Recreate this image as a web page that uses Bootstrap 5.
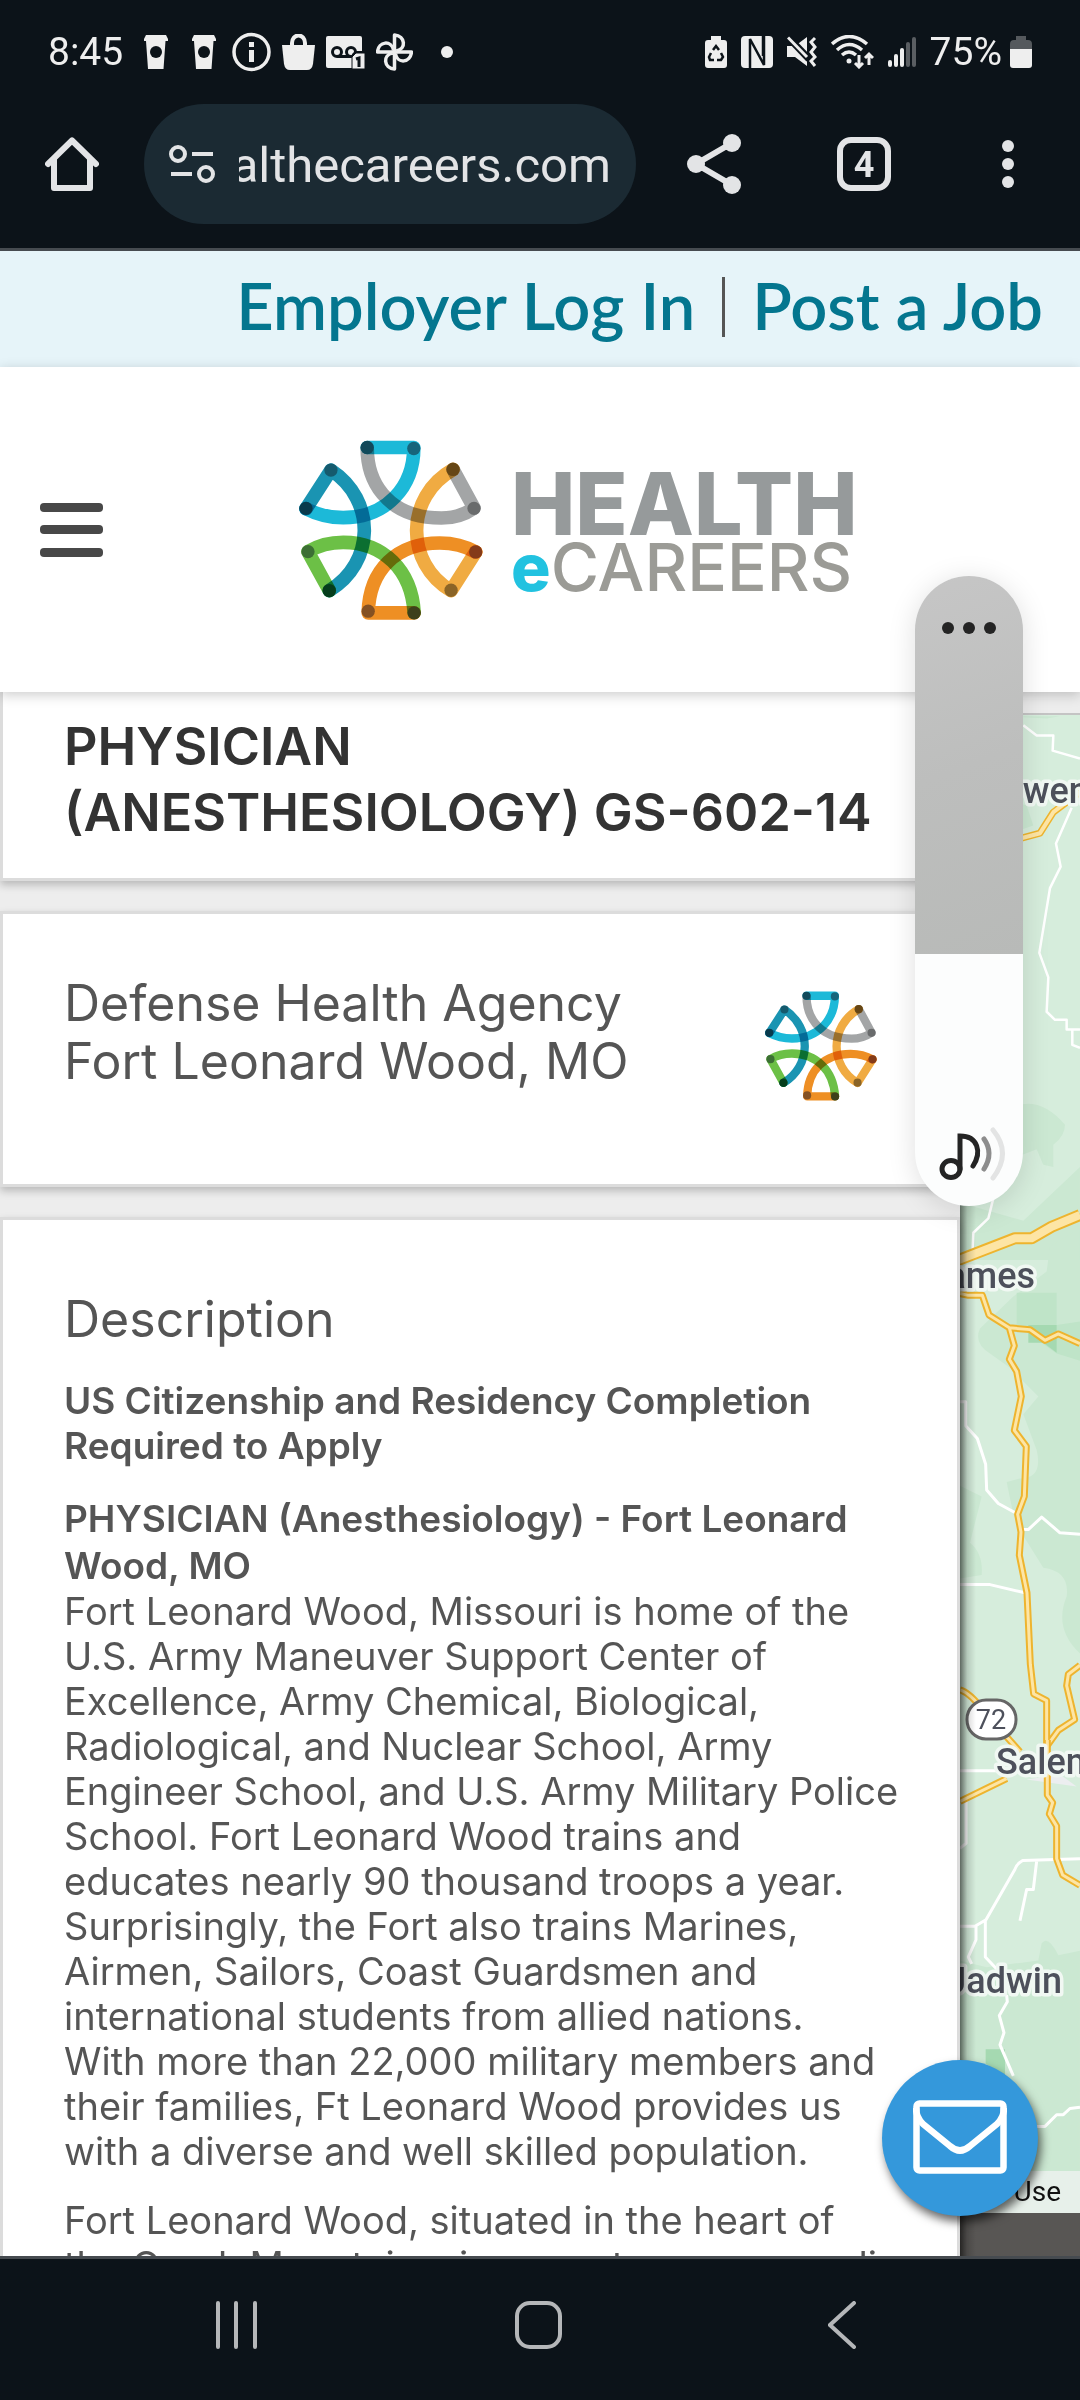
<!DOCTYPE html>
<html lang="en">
<head>
<meta charset="utf-8">
<meta name="viewport" content="width=device-width, initial-scale=1">
<title>Health eCareers</title>
<link href="https://cdn.jsdelivr.net/npm/bootstrap@5.3.0/dist/css/bootstrap.min.css" rel="stylesheet">
<style>
  body { font-family: "Inter", "Liberation Sans", sans-serif; color: #555; background: #ededed; }
  .sys { background: #0c1319; color: #e3e4e6; font-family: Roboto, sans-serif; }
  .sys button, .menu-btn { background: none; border: 0; padding: 0; color: inherit; line-height: 1; }
  svg { display: block; flex: none; }
  .status { height: 104px; padding: 0 48px; font-size: 39px; color: #eee; }
  .status-l { gap: 11px; }
  .status-l .cup-ico { margin: 0 5px 0 10px; }
  .status-l .more-dot { margin-left: 17px; }
  .status-r { gap: 14px; }
  .toolbar-row { height: 144px; padding: 0 66px 24px 45px; }
  .omni { width: 492px; height: 120px; border-radius: 60px; background: #1b2a33; padding: 0 25px; margin-left: 45px; }
  .share-btn { margin-left: 51px; }
  .tabs-btn { margin-left: 94px; }
  .url { width: 372px; font-size: 49px; line-height: 60px; padding-top: 4px; }
  .edge { height: 3px; background: #464b50; }
  .topbar { height: 116px; background: #e6f4f9; padding: 0 37px 4px 0; }
  .topbar a { color: #04768f; text-decoration: none; font-family: Lato, sans-serif; font-weight: 600; font-size: 65px; line-height: 60px; padding-bottom: 4px; }
  .topbar .rule { width: 3px; height: 60px; background: #555; margin: 0 27px; }
  .site-head { height: 325px; padding: 0 40px; color: #484848; z-index: 2; box-shadow: 0 3px 12px rgba(0,0,0,.2); }
  .brand { margin-left: 196px; gap: 28px; text-decoration: none; }
  .brand-a { font-weight: 800; font-size: 86px; line-height: 74px; color: #969a9b; }
  .brand-b { font-weight: 500; font-size: 66px; line-height: 52px; color: #9b9b96; }
  .brand-b b { color: #22c2e0; font-weight: 800; }
  .content-row { min-height: 0; }
  .panel { gap: 30px; z-index: 1; min-width: 0; }
  .sheet { background: #fff; border: 3px solid #dcdcdc; padding: 0 61px; box-shadow: 0 4px 8px rgba(0,0,0,.22); }
  .sheet-title { border-top: 0; padding-top: 22px; padding-bottom: 32px; }
  .sheet-title h1 { font-size: 52px; line-height: 66px; font-weight: 600; color: #333; margin: 0; white-space: nowrap; }
  .sheet-org { padding: 60px 80px 82px 61px; font-size: 50px; line-height: 58px; }
  .sheet-desc { padding-top: 70px; padding-bottom: 60px; }
  .sheet-desc h2 { font-size: 50px; line-height: 58px; font-weight: 400; margin: 0 0 30px; }
  .sheet-desc p { font-size: 38px; line-height: 45px; margin: 0 0 24px; white-space: nowrap; }
  .sheet-desc p.req { font-size: 37px; font-weight: 600; margin-bottom: 27px; }
  .sheet-desc .role { font-size: 37px; font-weight: 600; line-height: 47px; display: block; }
  .map-col { width: 120px; margin-top: 21px; background: #585654; border-top: 2px solid #c4c4c4; }
  .map-shade { width: 16px; background: linear-gradient(90deg, rgba(0,0,0,.5), rgba(0,0,0,.15) 45%, rgba(0,0,0,0)); }
  .map-lbl { font: 500 36px Roboto, sans-serif; fill: #4d505b; stroke: #f1f8f3; stroke-width: 7px; paint-order: stroke; stroke-linejoin: round; }
  .terms { height: 42px; background: #e7f0ea; color: #111; font: 28px/42px Roboto, sans-serif; padding-right: 19px; text-decoration: none; }
  .volume { right: 57px; top: 576px; width: 108px; height: 630px; border-radius: 54px; overflow: hidden; background: #fcfdfd; z-index: 5; box-shadow: 0 4px 28px rgba(0,0,0,.13); }
  .volume .lvl { height: 378px; background: linear-gradient(160deg, #c6c6c6, #bdbebd 50%, #b8bab8); padding-top: 46px; }
  .mail { right: 42px; bottom: 184px; width: 156px; height: 156px; border-radius: 50%; border: 0; background: #3498db; z-index: 4; padding: 0 0 2px; box-shadow: 3px 6px 10px rgba(0,0,0,.6); }
  .navkeys { height: 141px; padding: 0 224px 9px 216px; }
  .home-key { margin-left: 257px; }
</style>
<script src="https://cdn.jsdelivr.net/npm/bootstrap@5.3.0/dist/js/bootstrap.bundle.min.js"></script>
</head>
<body class="d-flex flex-column vh-100 overflow-hidden position-relative">

<svg width="0" height="0" class="position-absolute" aria-hidden="true">
  <defs>
    <symbol id="mark-logo" viewBox="57 60 553 540">
      <g fill="none" stroke-width="41" stroke-linejoin="round" stroke-linecap="round">
        <g style="mix-blend-mode:multiply" stroke="#a3a5a6"><path d="M262 84C262 170 310 294 485 294Q540 294 583 264L520 148"/></g>
        <g style="mix-blend-mode:multiply" stroke="#1cb9d8"><path d="M78 266Q130 293 190 293C320 293 402 200 402 82H262"/></g>
        <g style="mix-blend-mode:multiply" stroke="#1a94b2"><path d="M78 266L153 150C290 240 285 430 148 512"/></g>
        <g style="mix-blend-mode:multiply" stroke="#6cc046"><path d="M148 512L84 395Q130 367 190 367C310 367 395 450 403 578"/></g>
        <g style="mix-blend-mode:multiply" stroke="#ee8f24"><path d="M403 579H265C268 450 350 369 480 369Q540 369 588 396"/></g>
        <g style="mix-blend-mode:multiply" stroke="#f0ab42"><path d="M520 148C375 230 375 430 514 512L588 396"/></g>
      </g>
      <circle cx="262" cy="82" r="20" fill="#11495a"/><circle cx="402" cy="85" r="20" fill="#17657b"/>
      <circle cx="153" cy="150" r="20" fill="#155a6d"/><circle cx="78" cy="265" r="20" fill="#093a4c"/>
      <circle cx="520" cy="148" r="20" fill="#664615"/><circle cx="583" cy="265" r="20" fill="#696b6c"/>
      <circle cx="84" cy="395" r="20" fill="#3c6f34"/><circle cx="148" cy="512" r="20" fill="#053d1c"/>
      <circle cx="588" cy="396" r="20" fill="#843b19"/><circle cx="514" cy="511" r="20" fill="#8b6426"/>
      <circle cx="265" cy="574" r="20" fill="#855122"/><circle cx="403" cy="579" r="20" fill="#3d401b"/>
    </symbol>
    <symbol id="cup" viewBox="0 0 24 36"><path fill="#eee" d="M2 1H22L24 5V7H21.500L19.500 35H4L2 7H0V5Z"/><circle cx="12" cy="18" r="6" fill="#0c1319"/></symbol>
  </defs>
</svg>

<div class="sys">
  <div class="status d-flex align-items-center justify-content-between">
    <div class="status-l d-flex align-items-center">
      <span>8:45</span>
      <svg class="cup-ico" width="24" height="36"><use href="#cup"/></svg>
      <svg class="cup-ico ms-2" width="24" height="36"><use href="#cup"/></svg>
      <svg width="39" height="40" viewBox="0 0 39 40"><circle cx="19.500" cy="20" r="17.500" fill="none" stroke="#eee" stroke-width="3.500"/><path fill="#eee" d="M17 10h5v5h-5zM17 18h5v12h-5z"/></svg>
      <svg width="33" height="36" viewBox="0 0 33 36"><path fill="none" stroke="#eee" stroke-width="4" d="M10 12V9a6 7 0 0 1 13 0v3"/><path fill="#eee" d="M0 11h33l-2 19q-1 6-6 6H8q-5 0-6-6Z"/></svg>
      <svg width="39" height="34" viewBox="0 0 39 34"><path fill="#eee" d="M2 1H34q2 0 2 2V16H29l-3 3V33H2q-2 0-2-2V3Q0 1 2 1Z"/><g fill="none" stroke="#0c1319" stroke-width="3"><circle cx="11" cy="17" r="4.500"/><circle cx="25" cy="17" r="4.500"/><path d="M11 21.500H25"/></g><path fill="#eee" stroke="#0c1319" stroke-width="1" d="M30 18h9v16H26V22Z"/><path d="M30 24l3-1v9" fill="none" stroke="#0c1319" stroke-width="3"/></svg>
      <svg width="37" height="38" viewBox="-18.500 -19 37 38"><g fill="none" stroke="#eee" stroke-width="3.500" stroke-linejoin="round"><path id="vane" d="M0 0V-17C11-16 12-3 2-1"/><use href="#vane" transform="rotate(90)"/><use href="#vane" transform="rotate(180)"/><use href="#vane" transform="rotate(270)"/></g></svg>
      <svg class="more-dot" width="12" height="12"><circle cx="6" cy="6" r="6" fill="#eee"/></svg>
    </div>
    <div class="status-r d-flex align-items-center">
      <svg width="22" height="32" viewBox="0 0 22 32"><path fill="#eee" d="M6 0h10v4h3q3 0 3 3v22q0 3-3 3H3q-3 0-3-3V7q0-3 3-3h3z"/><g fill="none" stroke="#0c1319" stroke-width="2.500"><path d="M8 14l3-4 3 4M16 17l2 4-2 3h-4M9 24H5l-1-3 2-4"/></g></svg>
      <svg width="32" height="32" viewBox="0 0 32 32"><rect width="32" height="32" rx="4" fill="#eee"/><path d="M9 32V3L23 29V0M9 14V32M22 0V20" fill="none" stroke="#0c1319" stroke-width="2.500"/></svg>
      <svg width="30" height="32" viewBox="0 0 30 32"><path fill="#eee" d="M0 10h8L20 1v29L8 21H0z"/><path d="M0 0L22 23" stroke="#0c1319" stroke-width="7"/><path d="M1 1.500L20 21" stroke="#eee" stroke-width="3"/><path d="M28 2l-4 4 4 5-4 5 4 5-4 4 4 5" fill="none" stroke="#eee" stroke-width="3"/></svg>
      <svg width="43" height="34" viewBox="0 0 43 34"><g fill="none" stroke="#eee" stroke-width="3.500"><path d="M1 9Q18-6 36 9M6 15Q18 4 31 15M11 20Q18 14 25 20"/><path stroke-width="3" d="M28 20V32M24 28l4 4 4-4M38 30V19M34 23l4-4 4 4"/></g><circle cx="18" cy="26" r="2.500" fill="#eee"/></svg>
      <svg width="28" height="30" viewBox="0 0 28 30" stroke-width="4" stroke-linecap="round"><path stroke="#eee" d="M2 25v3M8 19v9M14 13v15"/><path stroke="#5a5e62" d="M20 7v21M26 2v26"/></svg>
      <span class="d-flex align-items-center gap-2">75%
      <svg width="22" height="32" viewBox="0 0 22 32"><path fill="#55595d" d="M6 0h10v4h2q4 0 4 4v6H0V8q0-4 4-4h2z"/><path fill="#eee" d="M0 13h22v16q0 3-3 3H3q-3 0-3-3z"/></svg></span>
    </div>
  </div>
  <div class="toolbar-row d-flex align-items-center">
    <button aria-label="Home"><svg width="54" height="54" viewBox="0 0 54 54" fill="none" stroke="#e3e4e6" stroke-width="6" stroke-linecap="round" stroke-linejoin="round"><path d="M3 27L27 3.500 51 27M9 22V51H45V22"/></svg></button>
    <div class="omni d-flex align-items-center justify-content-between">
      <svg width="46" height="40" viewBox="0 0 46 40" fill="none" stroke="#e3e4e6" stroke-width="4"><circle cx="9" cy="10" r="7"/><path d="M23 10H44M2 30H23"/><circle cx="37" cy="30" r="7"/></svg>
      <div class="url overflow-hidden d-flex justify-content-end">healthecareers.com</div>
    </div>
    <button class="share-btn" aria-label="Share"><svg width="56" height="60" viewBox="0 0 56 60" fill="#e3e4e6"><path d="M45 9L9 30 45 51" fill="none" stroke="#e3e4e6" stroke-width="6"/><circle cx="9" cy="30" r="9"/><circle cx="45" cy="9" r="9"/><circle cx="45" cy="51" r="9"/></svg></button>
    <button class="tabs-btn" aria-label="Tabs"><svg width="54" height="54" viewBox="0 0 54 54"><rect x="3" y="3" width="48" height="48" rx="11" fill="none" stroke="#e3e4e6" stroke-width="6"/><text x="27" y="40" text-anchor="middle" font-family="Roboto" font-weight="700" font-size="36" fill="#e3e4e6">4</text></svg></button>
    <button class="ms-auto" aria-label="More"><svg width="12" height="48" viewBox="0 0 12 48" fill="#e3e4e6"><circle cx="6" cy="6" r="6"/><circle cx="6" cy="24" r="6"/><circle cx="6" cy="42" r="6"/></svg></button>
  </div>
</div>
<div class="edge flex-shrink-0"></div>

<nav class="topbar d-flex align-items-center justify-content-end flex-shrink-0">
  <a href="#">Employer Log In</a><span class="rule"></span><a href="#">Post a Job</a>
</nav>

<header class="site-head d-flex align-items-center bg-white position-relative flex-shrink-0">
  <button class="menu-btn" aria-label="Menu"><svg width="63" height="54" viewBox="0 0 63 54" fill="#484848"><rect width="63" height="9" rx="4"/><rect y="22" width="63" height="9" rx="4"/><rect y="45" width="63" height="9" rx="4"/></svg></button>
  <a href="#" class="brand d-flex align-items-center">
    <svg width="184" height="180"><use href="#mark-logo"/></svg>
    <span class="d-flex flex-column"><span class="brand-a">HEALTH</span><span class="brand-b"><b>e</b>CAREERS</span></span>
  </a>
</header>

<main class="content-row d-flex flex-fill overflow-hidden">
  <div class="panel d-flex flex-column flex-fill position-relative">
    <section class="sheet sheet-title"><h1>PHYSICIAN<br>(ANESTHESIOLOGY) GS-602-14</h1></section>
    <section class="sheet sheet-org d-flex justify-content-between">
      <div>Defense Health Agency<br>Fort Leonard Wood, MO</div>
      <svg class="mt-3" width="112" height="112"><use href="#mark-logo"/></svg>
    </section>
    <section class="sheet sheet-desc">
      <h2>Description</h2>
      <p class="req">US Citizenship and Residency Completion<br>Required to Apply</p>
      <p><strong class="role">PHYSICIAN (Anesthesiology) - Fort Leonard<br>Wood, MO</strong>Fort Leonard Wood, Missouri is home of the<br>U.S. Army Maneuver Support Center of<br>Excellence, Army Chemical, Biological,<br>Radiological, and Nuclear School, Army<br>Engineer School, and U.S. Army Military Police<br>School. Fort Leonard Wood trains and<br>educates nearly 90 thousand troops a year.<br>Surprisingly, the Fort also trains Marines,<br>Airmen, Sailors, Coast Guardsmen and<br>international students from allied nations.<br>With more than 22,000 military members and<br>their families, Ft Leonard Wood provides us<br>with a diverse and well skilled population.</p>
      <p>Fort Leonard Wood, situated in the heart of<br>the Ozark Mountains, is a great, ever expanding</p>
    </section>
  </div>
  <aside class="map-col position-relative overflow-hidden flex-shrink-0">
    <svg width="120" height="1456" viewBox="960 715 120 1456" fill="none" stroke-linejoin="round">
      <path fill="#d6eddc" d="M960 715h120v1456H960z"/>
      <g transform="translate(880 560) scale(.3333 .4464)">
        <path fill="#cbe8d2" d="M430 350H540L500 355 430 352ZM400 540L440 550 460 595 400 610ZM400 1225Q480 1200 555 1265 555 1290 520 1310V1360L490 1355 470 1320 400 1340ZM240 1440L430 1480 600 1360V1568H240Z"/>
        <g stroke="#fff" stroke-width="2.500"><path vector-effect="non-scaling-stroke" d="M430 370L470 393H520L518 427 600 445M575 555L528 635 542 687 510 735 478 880 505 935 500 1012 525 1030H560V1052H600M577 1052V1086L600 1093M340 1430L325 1475 280 1507 277 1560"/></g>
        <path vector-effect="non-scaling-stroke" stroke="#eeb42e" stroke-width="7" d="M400 628L480 612 520 565 600 520"/><path vector-effect="non-scaling-stroke" stroke="#fde5a5" stroke-width="4" d="M400 628L480 612 520 565 600 520"/>
      </g>
      <g transform="translate(920 1200) scale(.3333 .3571)">
        <path fill="#cbe8d2" d="M480 80L390 130 380 200 280 270 180 360Q160 400 210 430L270 470 355 550 310 600 350 700Q370 780 300 780L260 790 280 880 310 940 370 1030Q450 1040 440 1110 400 1200 480 1270ZM120 800L185 830 150 960Q190 990 185 1050L120 1060Z"/>
        <path fill="#bfe4c8" d="M290 260H410V350L480 340V450L410 430 290 350Z"/><path fill="#a5d9b1" d="M325 350H410V428L370 400H325Z"/>
        <g stroke="#fff" stroke-width="3"><path vector-effect="non-scaling-stroke" d="M120 565H137V632L172 668 197 740 200 812 235 850 290 878M305 923H325L365 888 420 932 480 936M120 1077H210L315 1100"/></g>
        <g stroke="#eeb42e" stroke-width="7"><path vector-effect="non-scaling-stroke" stroke-width="12" d="M110 170L285 107H335L395 75 480 42"/><path vector-effect="non-scaling-stroke" d="M120 262L145 267H187L207 322 268 358 330 363 375 393 415 375 480 402M268 358L283 408 268 446 290 480 304 550 283 645 319 690 313 830 293 880 303 930 298 995 321 1100 331 1300 341 1383 380 1402V1560M120 1372Q150 1380 190 1430L300 1545M480 1303L445 1328 440 1360 464 1455 415 1485 380 1530"/></g>
        <g stroke="#fde5a5" stroke-width="3"><path vector-effect="non-scaling-stroke" stroke-width="8" d="M110 170L285 107H335L395 75 480 42"/><path vector-effect="non-scaling-stroke" d="M120 262L145 267H187L207 322 268 358 330 363 375 393 415 375 480 402M268 358L283 408 268 446 290 480 304 550 283 645 319 690 313 830 293 880 303 930 298 995 321 1100 331 1300 341 1383 380 1402V1560M120 1372Q150 1380 190 1430L300 1545M480 1303L445 1328 440 1360 464 1455 415 1485 380 1530"/></g>
      </g>
      <g transform="translate(860 1740) scale(.3333 .3444)">
        <path fill="#cbe8d2" d="M300 640L380 660 535 640 545 590Q565 565 595 625L660 612V1252H300Z"/><path fill="#a5d9b1" d="M377 898H435V975L377 940Z"/><path fill="#eceef0" d="M500 115L650 135 600 100Z"/>
        <g stroke="#fff" stroke-width="3"><path vector-effect="non-scaling-stroke" d="M300 89H420M318 175V300L300 315M660 345L488 350Q470 360 465 375L378 522 345 541H300M530 352L520 434H500L480 525M348 541V580L325 630 335 650M376 522V630L410 665M440 740L442 760 418 800 432 850 420 885 460 975M530 1122H555L590 1088H610L630 1070 660 1066"/></g>
        <g stroke="#eeb42e" stroke-width="7"><path vector-effect="non-scaling-stroke" d="M300 178L440 112M562 0V160L578 182 568 215 590 250V345L608 392 660 422"/></g>
        <g stroke="#fde5a5" stroke-width="3"><path vector-effect="non-scaling-stroke" d="M300 178L440 112M562 0V160L578 182 568 215 590 250V345L608 392 660 422"/></g>
      </g>
      <rect x="967" y="1700" width="49" height="39" rx="19" fill="#fff" stroke="#666" stroke-width="3"/>
      <text x="991" y="1729" text-anchor="middle" font-family="Roboto" font-size="27" fill="#4d505b">72</text>
      <g class="map-lbl"><text x="998" y="803">Owensville</text><text x="1035" y="1288" text-anchor="end">James</text><text x="996" y="1774">Salem</text><text x="1062" y="1993" text-anchor="end">Jadwin</text></g>
    </svg>
    <a href="#" class="terms d-flex justify-content-end">Use</a>
    <div class="map-shade position-absolute top-0 bottom-0 start-0"></div>
  </aside>
</main>

<div class="volume position-absolute d-flex flex-column justify-content-between">
  <div class="lvl d-flex justify-content-center"><svg width="54" height="12" viewBox="0 0 54 12" fill="#242424"><circle cx="6" cy="6" r="6"/><circle cx="27" cy="6" r="6"/><circle cx="48" cy="6" r="6"/></svg></div>
  <svg class="mx-auto mb-4" width="74" height="56" viewBox="-8 0 74 56" fill="none" stroke="#242424" stroke-width="5" stroke-linecap="round"><ellipse cx="11" cy="43" rx="9" ry="8.500"/><path d="M20 43V10C38 10 42 26 33 40"/><path stroke="#8d8d8d" d="M44 13Q54 27 44 43"/><path stroke="#e3e4e4" d="M53 4Q72 27 53 52"/></svg>
</div>

<button class="mail position-absolute d-flex align-items-center justify-content-center" aria-label="Email"><svg width="94" height="74" viewBox="0 0 94 74" fill="none" stroke="#fff" stroke-width="6.500" stroke-linejoin="round"><rect x="3.500" y="3.500" width="87" height="67" rx="3"/><path d="M3 8Q3 17 10 24L37 46Q47 55 57 46L84 24Q91 17 91 8"/></svg></button>

<div class="edge flex-shrink-0 position-relative"></div>
<div class="sys navkeys d-flex align-items-center flex-shrink-0">
  <button aria-label="Recents"><svg width="42" height="48" viewBox="0 0 42 48" stroke="#b5b7b9" stroke-width="4" stroke-linecap="round"><path d="M2 2v44M20 2v44M39 2v44"/></svg></button>
  <button class="home-key" aria-label="Home screen"><svg width="48" height="48" viewBox="0 0 48 48"><rect x="2" y="2" width="43" height="44" rx="13" fill="none" stroke="#b5b7b9" stroke-width="4"/></svg></button>
  <button class="ms-auto" aria-label="Back"><svg width="28" height="48" viewBox="0 0 28 48" fill="none" stroke="#b5b7b9" stroke-width="4" stroke-linecap="round"><path d="M26 2L2 24 26 46"/></svg></button>
</div>
</body>
</html>
